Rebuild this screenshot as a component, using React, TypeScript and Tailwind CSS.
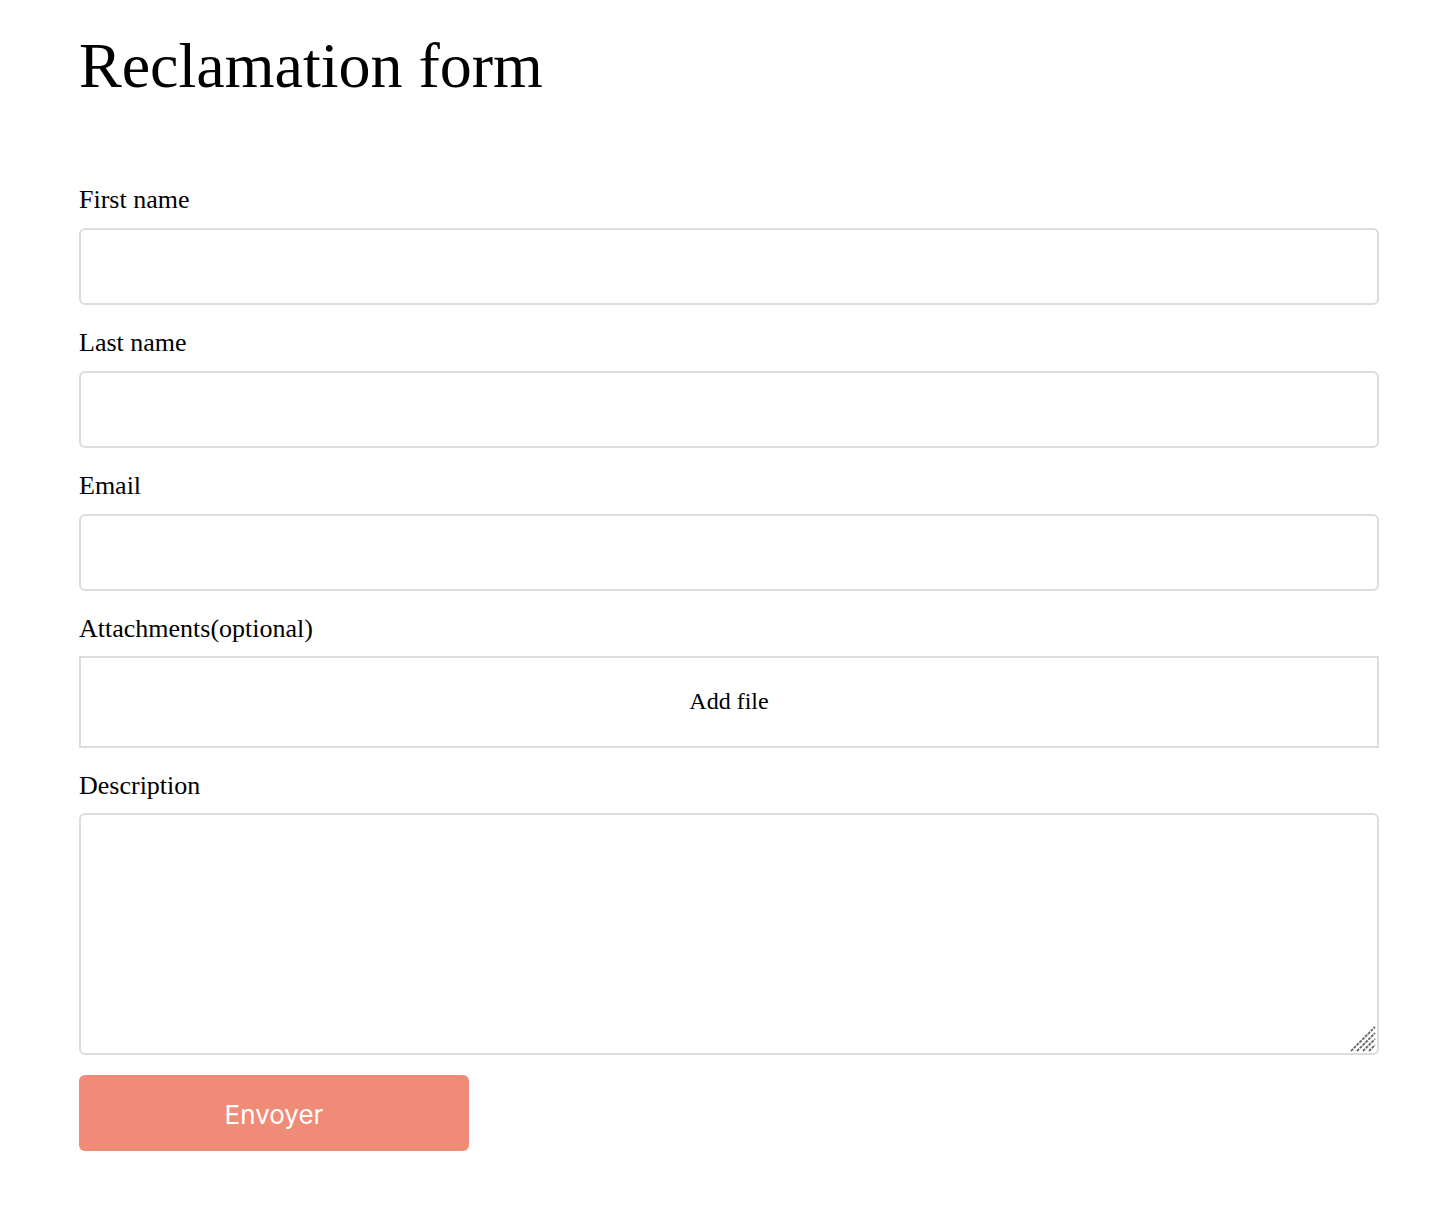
const serif = "font-['Times_New_Roman','Liberation_Serif',serif]"

const Field = ({ label }: { label: string }) => (
  <div className="flex flex-col">
    <label className="text-[26px] leading-[30px] text-black mb-[13px]">{label}</label>
    <input
      type="text"
      className="h-[77px] w-full rounded-[6px] border-2 border-[#dcdcdc] bg-white px-3 outline-none"
    />
  </div>
)

// Safari-style resize grip
const Grip = () => (
  <svg className="pointer-events-none absolute right-[3px] bottom-[3px]" width="26" height="26" viewBox="0 0 26 26">
    <g stroke="#666666" strokeWidth="1.8" strokeDasharray="3 1">
      <line x1="1" y1="25" x2="25" y2="1" />
      <line x1="7" y1="25" x2="25" y2="7" />
      <line x1="13" y1="25" x2="25" y2="13" />
      <line x1="19" y1="25" x2="25" y2="19" />
    </g>
  </svg>
)

export default function App() {
  return (
    <div className={`min-h-screen bg-white ${serif}`}>
      <div className="ml-[79px] w-[1300px] pt-[34px] pb-16">
        <h1 className="text-[64px] leading-[64px] text-black">Reclamation form</h1>

        <form className="mt-[87px] flex flex-col gap-[23px]" onSubmit={(e) => e.preventDefault()}>
          <Field label="First name" />
          <Field label="Last name" />
          <Field label="Email" />

          <div className="flex flex-col">
            <label className="text-[26px] leading-[30px] text-black mb-[12px]">Attachments(optional)</label>
            <div className="flex h-[92px] w-full items-center justify-center border-2 border-[#dcdcdc] bg-white">
              <span className="text-[24px] leading-[28px] text-black -mt-[2px]">Add file</span>
            </div>
          </div>

          <div className="flex flex-col">
            <label className="text-[26px] leading-[30px] text-black mb-[12px]">Description</label>
            <div className="relative">
              <textarea className="block h-[242px] w-full resize-none rounded-[6px] border-2 border-[#dcdcdc] bg-white p-3 outline-none" />
              <Grip />
            </div>
          </div>

          <button
            type="submit"
            className="-mt-[3px] h-[76px] w-[390px] rounded-[6px] bg-[#ef8b76] pt-[3px] font-['Inter','Liberation_Sans',sans-serif] text-[26px] text-white"
          >
            Envoyer
          </button>
        </form>
      </div>
    </div>
  )
}
